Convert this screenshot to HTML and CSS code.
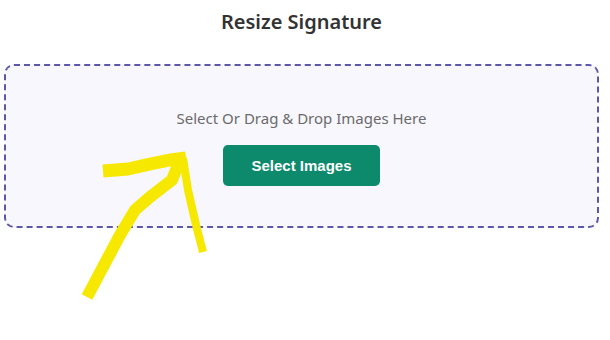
FILE: index.html
```html
<!DOCTYPE html>
<html>
<head>
<meta charset="utf-8">
<link rel="stylesheet" href="styles.css">
</head>
<body>
<div class="page">
  <h1 class="title">Resize Signature</h1>
  <div class="dropzone">
    <p class="hint">Select Or Drag &amp; Drop Images Here</p>
    <button class="btn">Select Images</button>
  </div>
</div>
<svg class="scribble" width="610" height="340" viewBox="0 0 610 340">
  <g fill="none" stroke="#f7e800" stroke-linejoin="round">
    <polyline points="103,171 128,169 150,164 170,160 186,158" stroke-width="13"/>
    <polyline points="183,158 188,190 196,225 203,252" stroke-width="8"/>
    <polyline points="180,160 172,180 150,197 135,210 120,235 87,297" stroke-width="12"/>
  </g>
</svg>
</body>
</html>
```
FILE: styles.css
```css
html, body {
  margin: 0;
  padding: 0;
  background: #ffffff;
}
.page {
  padding: 8px 11px 0 4px;
  font-family: "Noto Sans", "Open Sans", sans-serif;
}
.title {
  margin: 0 0 28px 0;
  text-align: center;
  font-size: 20px;
  font-weight: 600;
  color: #333333;
  line-height: 28px;
}
.dropzone {
  border: 2px dashed #5c57a8;
  border-radius: 10px;
  background: #f7f7fd;
  height: 164px;
  box-sizing: border-box;
  display: flex;
  flex-direction: column;
  align-items: center;
  padding-top: 40px;
}
.hint {
  margin: 0;
  font-size: 15px;
  line-height: 24px;
  color: #6b6b6b;
}
.btn {
  margin-top: 15px;
  width: 157px;
  height: 41px;
  border: none;
  border-radius: 5px;
  background: #0c8a6b;
  color: #ffffff;
  font-family: "Liberation Sans", Arial, sans-serif;
  font-weight: bold;
  font-size: 15px;
}
.scribble {
  position: absolute;
  left: 0;
  top: 0;
  pointer-events: none;
}
```
